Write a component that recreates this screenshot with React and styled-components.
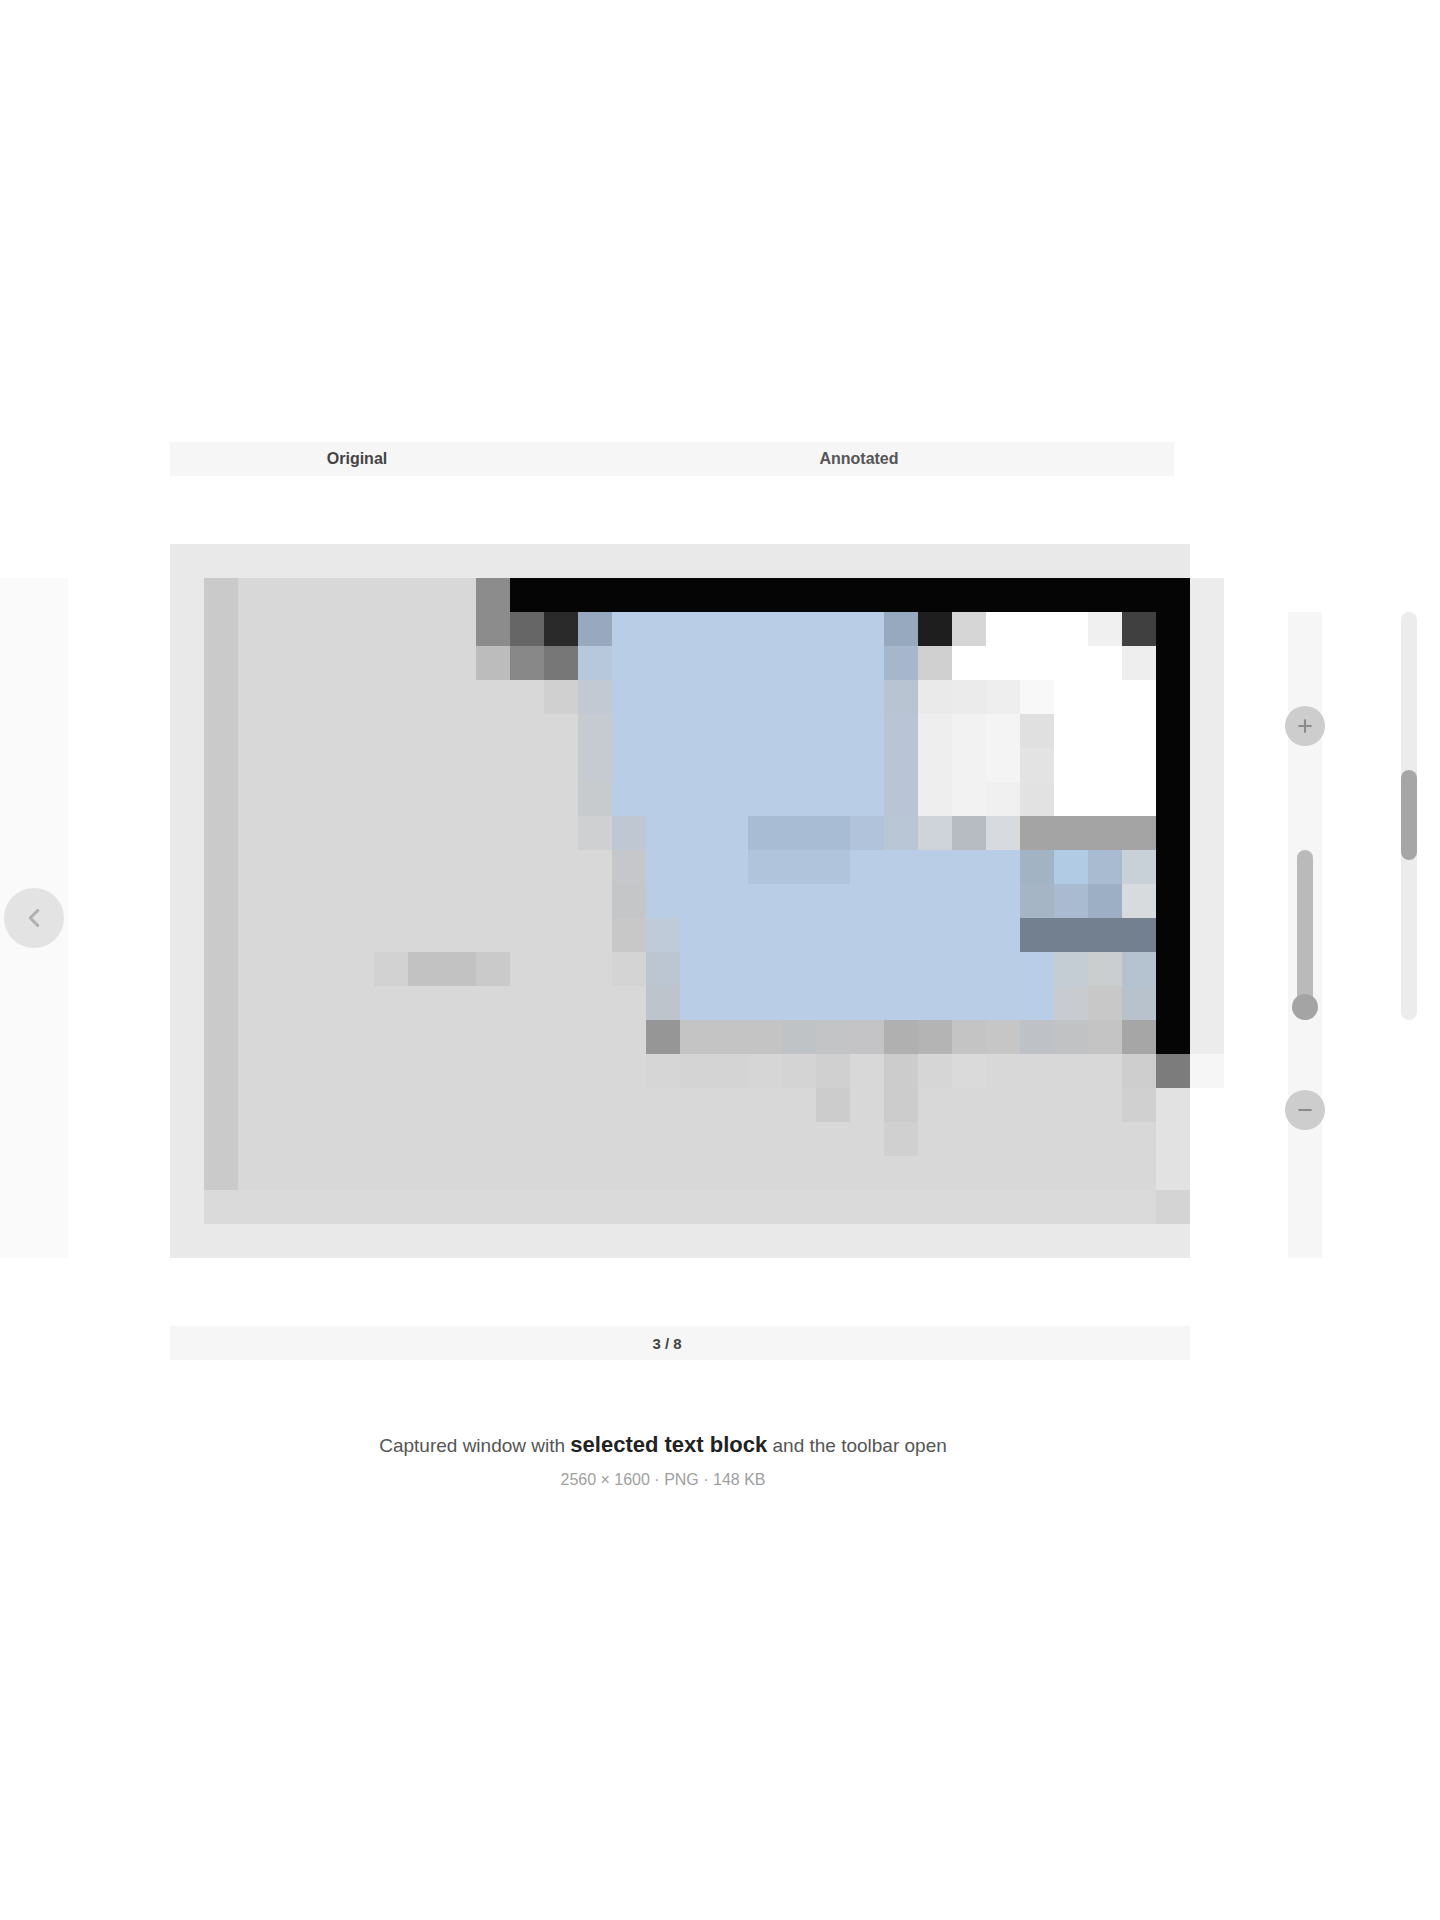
import React from "react";
import styled, { createGlobalStyle } from "styled-components";
import { ChevronLeft, Plus, Minus } from "lucide-react";

const GlobalStyle = createGlobalStyle`
  html, body {
    margin: 0;
    padding: 0;
    background: #ffffff;
  }

  body {
    font-family: "Liberation Sans", Arial, sans-serif;
  }
`;

// screenshot thumbnail, one 34px cell per token ("hex*count", "-" = empty)
const SHOT = [
  "cacaca d8d8d8*7 8c8c8c 050505*20 ececec",
  "cacaca d8d8d8*7 8c8c8c 666666 2a2a2a 97a8bf b9cde6*8 97a9bf 1e1e1e d6d6d6 ffffff*3 f0f0f0 404040 050505 ececec",
  "cacaca d8d8d8*7 bcbcbc 888888 777777 b8c8dc b9cde6*8 a6b6cb d0d0d0 ffffff*5 eeeeee 050505 ececec",
  "cacaca d8d8d8*9 d0d0d0 c2c9d2 b9cde6*8 b8c4d2 eaeaea ebebeb eeeeee f8f8f8 ffffff*3 050505 ececec",
  "cacaca d8d8d8*10 c6cbd2 b9cde6*8 b9c5d4 eeeeee f2f2f2 f4f4f4 e0e0e0 ffffff*3 050505 ececec",
  "cacaca d8d8d8*10 c6cbd2 b9cde6*8 b9c5d4 eeeeee f2f2f2 f4f4f4 e3e3e3 ffffff*3 050505 ececec",
  "cacaca d8d8d8*10 c8cbce b9cde6*8 b9c5d4 eeeeee f2f2f2 f0f0f0 e2e2e2 ffffff*3 050505 ececec",
  "cacaca d8d8d8*10 cfd0d2 bfc8d2 b9cde6*3 a8bcd4*3 b0c3da b8c6d6 cfd4da b7bcc3 d7dbe0 a4a4a4*4 050505 ececec",
  "cacaca d8d8d8*11 c5c7ca b9cde6*3 b0c4dc*3 b9cde6*5 a2b3c4 b2cbe4 a9bbd0 c8d0d8 050505 ececec",
  "cacaca d8d8d8*11 c4c6c8 b9cde6*11 a5b5c5 a8bbd0 9cafc4 d8dbde 050505 ececec",
  "cacaca d8d8d8*11 c8c8c8 bfcbd9 b9cde6*10 728090*4 050505 ececec",
  "cacaca d8d8d8*4 d2d2d2 c2c2c2*2 cacaca d8d8d8*3 d4d4d4 bcc6d0 b9cde6*11 c4ccd4 cacece b5c2d0 050505 ececec",
  "cacaca d8d8d8*12 bdc4cc b9cde6*11 c8ccd0 c8c8c8 b8c2cc 050505 ececec",
  "cacaca d8d8d8*12 969696 c4c4c4*3 c0c3c6 c2c4c6 c4c4c6 b0b0b0 b4b4b4 c4c4c4 c6c6c6 bec2c6 c0c2c4 c4c4c4 a6a6a6 050505 ececec",
  "cacaca d8d8d8*12 d6d6d6 d4d4d4*2 d6d6d6 d4d4d4 d0d0d0 d8d8d8 cccccc d6d6d6 dadada d8d8d8*4 cecece 7c7c7c f6f6f6",
  "cacaca d8d8d8*17 cccccc d8d8d8 cccccc d8d8d8*6 d0d0d0 e2e2e2 -",
  "cacaca d8d8d8*19 d0d0d0 d8d8d8*7 e2e2e2 -",
  "cacaca d8d8d8*27 e2e2e2 -",
  "dadada*28 d4d4d4 -",
];

const Page = styled.main`
  min-height: 1920px;
  padding-top: 442px;
  box-sizing: border-box;
`;

const TabBar = styled.nav`
  margin-left: 170px;
  width: 1004px;
  height: 34px;
  display: grid;
  grid-template-columns: 374px 1fr;
  background: #f6f6f6;
`;

const Tab = styled.span`
  display: flex;
  align-items: center;
  justify-content: center;
  font-size: 16px;
  font-weight: 700;
  color: ${(p) => (p.$active ? "#444444" : "#555555")};
`;

const Stage = styled.section`
  display: flex;
  align-items: flex-start;
  height: 714px;
  margin-top: 68px;
`;

const PrevPeek = styled.div`
  flex-shrink: 0;
  width: 68px;
  height: 680px;
  margin-top: 34px;
  background: #fafafa;
  display: flex;
  align-items: center;
  justify-content: center;
`;

const RoundButton = styled.button`
  flex-shrink: 0;
  display: flex;
  align-items: center;
  justify-content: center;
  width: ${(p) => p.$size}px;
  height: ${(p) => p.$size}px;
  padding: 0;
  border: 0;
  border-radius: 50%;
  background: ${(p) => p.$bg};
  color: ${(p) => p.$fg};
  cursor: pointer;
`;

const Figure = styled.figure`
  flex-shrink: 0;
  width: 1020px;
  height: 714px;
  margin: 0 0 0 102px;
  padding: 34px 0 0 34px;
  box-sizing: border-box;
  background: #e9e9e9;

  svg {
    display: block;
  }
`;

const ZoomRail = styled.div`
  flex-shrink: 0;
  width: 34px;
  height: 646px;
  margin: 68px 0 0 98px;
  padding-top: 94px;
  box-sizing: border-box;
  background: #f6f6f6;
  display: flex;
  flex-direction: column;
  align-items: center;
`;

const ZoomTrack = styled.div`
  position: relative;
  flex-shrink: 0;
  width: 16px;
  height: 170px;
  margin: 104px 0 70px;
  border-radius: 8px;
  background: #bababa;

  &::after {
    content: "";
    position: absolute;
    left: -5px;
    bottom: 0;
    width: 26px;
    height: 26px;
    border-radius: 50%;
    background: #a4a4a4;
  }
`;

const ScrollRail = styled.div`
  flex-shrink: 0;
  width: 16px;
  height: 408px;
  margin: 68px 0 0 79px;
  padding-top: 158px;
  box-sizing: border-box;
  border-radius: 8px;
  background: #ececec;
`;

const ScrollThumb = styled.div`
  width: 16px;
  height: 90px;
  border-radius: 8px;
  background: #a6a6a6;
`;

const Pager = styled.div`
  display: flex;
  align-items: center;
  justify-content: center;
  width: 1020px;
  height: 34px;
  margin: 68px 0 0 170px;
  padding-right: 26px;
  box-sizing: border-box;
  background: #f6f6f6;
  font-size: 15px;
  font-weight: 700;
  color: #444444;
`;

const Caption = styled.div`
  width: 986px;
  margin: 68px 0 0 170px;
  text-align: center;
`;

const CaptionTitle = styled.p`
  margin: 0;
  line-height: 34px;
  font-size: 19px;
  color: #555555;
  white-space: nowrap;

  strong {
    font-size: 22px;
    color: #222222;
  }
`;

const CaptionMeta = styled.p`
  margin: 0;
  line-height: 34px;
  font-size: 16px;
  color: #a0a0a0;
`;

function Screenshot() {
  const cells = [];
  SHOT.forEach((row, y) => {
    let x = 0;
    row.split(" ").forEach((token, i) => {
      const [hex, count] = token.split("*");
      const n = count ? Number(count) : 1;
      if (hex !== "-") {
        cells.push(
          <rect key={`${y}-${i}`} x={x} y={y} width={n} height={1} fill={`#${hex}`} />
        );
      }
      x += n;
    });
  });

  return (
    <svg
      width="1020"
      height="646"
      viewBox="0 0 30 19"
      shapeRendering="crispEdges"
      role="img"
      aria-label="Window screenshot"
    >
      {cells}
    </svg>
  );
}

export default function App() {
  return (
    <>
      <GlobalStyle />
      <Page>
        <TabBar>
          <Tab $active>Original</Tab>
          <Tab>Annotated</Tab>
        </TabBar>

        <Stage>
          <PrevPeek>
            <RoundButton $size={60} $bg="#e3e3e3" $fg="#b0b0b0" aria-label="Previous">
              <ChevronLeft size={30} strokeWidth={2.5} />
            </RoundButton>
          </PrevPeek>

          <Figure>
            <Screenshot />
          </Figure>

          <ZoomRail>
            <RoundButton $size={40} $bg="#cdcdcd" $fg="#8a8a8a" aria-label="Zoom in">
              <Plus size={20} strokeWidth={2.5} />
            </RoundButton>
            <ZoomTrack />
            <RoundButton $size={40} $bg="#cdcdcd" $fg="#8a8a8a" aria-label="Zoom out">
              <Minus size={20} strokeWidth={2.5} />
            </RoundButton>
          </ZoomRail>

          <ScrollRail>
            <ScrollThumb />
          </ScrollRail>
        </Stage>

        <Pager>3 / 8</Pager>

        <Caption>
          <CaptionTitle>
            Captured window with <strong>selected text block</strong> and the
            toolbar open
          </CaptionTitle>
          <CaptionMeta>2560 × 1600 · PNG · 148 KB</CaptionMeta>
        </Caption>
      </Page>
    </>
  );
}
